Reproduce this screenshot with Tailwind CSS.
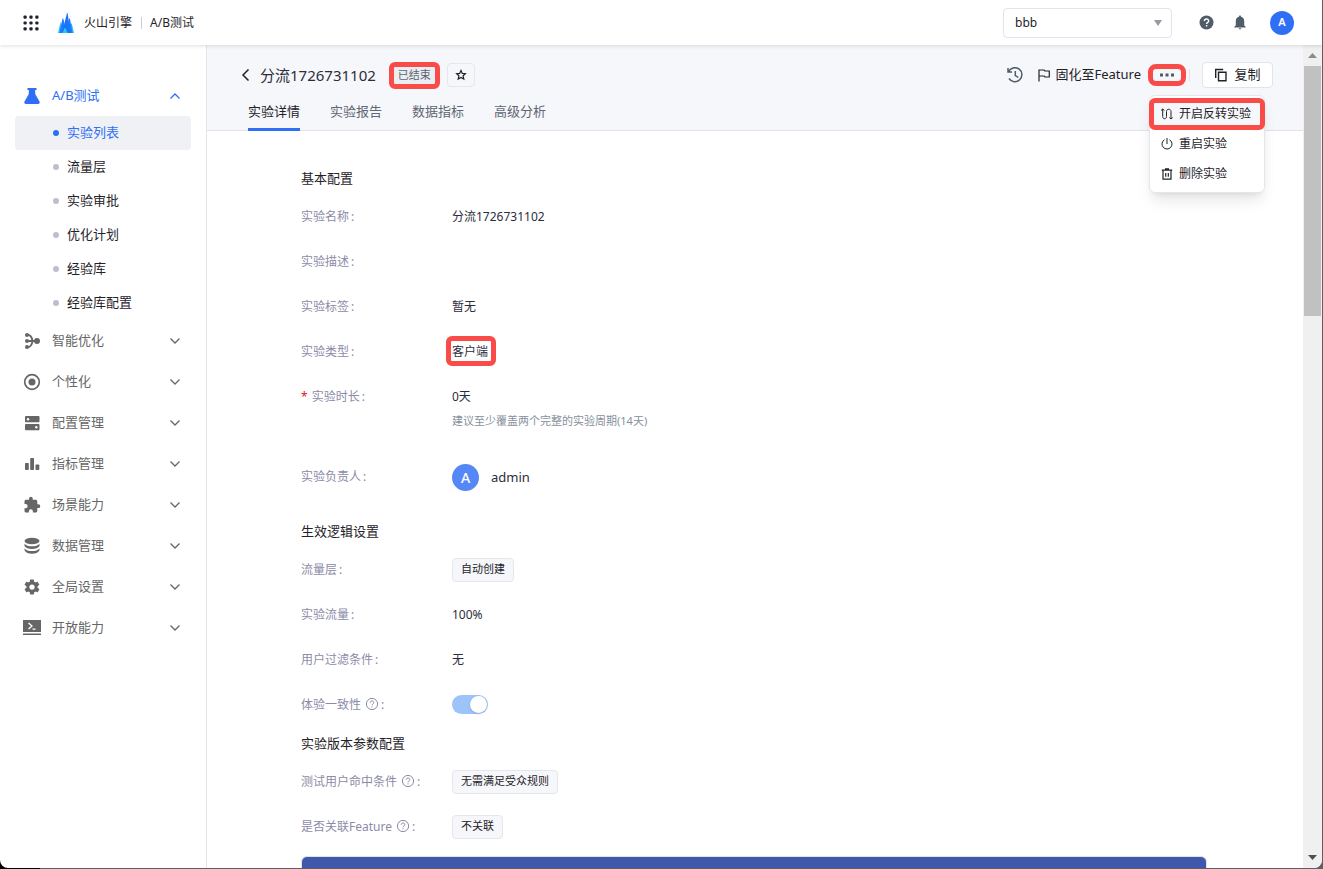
<!DOCTYPE html>
<html lang="zh-CN">
<head>
<meta charset="utf-8">
<title>A/B测试 - 实验详情</title>
<script src="https://cdn.jsdelivr.net/npm/@tailwindcss/browser@4"></script>
</head>
<body class="h-screen overflow-hidden bg-linear-to-r from-black from-3% to-[#606060] to-3% font-['Noto_Sans','Noto_Sans_CJK_SC',sans-serif] text-xs font-normal text-[#1f2329]">
<svg class="hidden">
  <symbol id="down" viewBox="0 0 12 12"><path d="M1.500 3.500 6 8l4.500-4.500" fill="none" stroke="currentColor" stroke-width="1.300"/></symbol>
  <symbol id="help" viewBox="0 0 14 14"><circle cx="7" cy="7" r="5.600" fill="none" stroke="currentColor"/><path d="M5.200 5.700c0-2.300 3.600-2.300 3.600-.1C8.800 7 7 6.900 7 8.300M7 9.300v1.100" fill="none" stroke="currentColor"/></symbol>
</svg>
<div class="flex h-full flex-col pr-px pb-px">
<div class="flex min-h-0 flex-1 flex-col overflow-hidden rounded-b-lg bg-white">

<header class="relative z-20 flex h-[45px] shrink-0 items-center bg-white pr-7 pl-[23px] shadow-[0_1px_4px_rgba(0,0,0,0.13)]">
  <button aria-label="应用" class="mr-[19px]"><svg class="size-4" viewBox="0 0 16 16" fill="#1f2329"><rect x="0.500" y="0.500" width="3.200" height="3.200" rx="1"/><rect x="6.400" y="0.500" width="3.200" height="3.200" rx="1"/><rect x="12.300" y="0.500" width="3.200" height="3.200" rx="1"/><rect x="0.500" y="6.400" width="3.200" height="3.200" rx="1"/><rect x="6.400" y="6.400" width="3.200" height="3.200" rx="1"/><rect x="12.300" y="6.400" width="3.200" height="3.200" rx="1"/><rect x="0.500" y="12.300" width="3.200" height="3.200" rx="1"/><rect x="6.400" y="12.300" width="3.200" height="3.200" rx="1"/><rect x="12.300" y="12.300" width="3.200" height="3.200" rx="1"/></svg></button>
  <svg class="mr-2.5 h-5 w-4" viewBox="0 0 16 20"><path d="M0 20 2.500 9.500h.7L5 20z" fill="#20c7dc"/><path d="M16 20l-2.200-9.500h-.7L11 20z" fill="#20c7dc"/><path d="M1.500 20 4.500 5.500h.8L8.500 20z" fill="#1f7bff"/><path d="M8.500 20l2.600-14.500h.8L14.500 20z" fill="#1f7bff"/><path d="M4 20 9 0h.6L12.500 20z" fill="#1b72ff"/><path d="M4.500 20l2.200-5h.8L9.500 20z" fill="#21cfe0"/></svg>
  <a href="#">火山引擎</a>
  <span class="mr-2 ml-[9px] h-3 w-px bg-[#c9cdd4]"></span>
  <span>A/B测试</span>
  <div class="relative ml-auto w-[169px]">
    <select aria-label="项目" class="h-[30px] w-full appearance-none rounded border border-[#e1e4ea] bg-white pl-[11px] text-xs font-normal"><option>bbb</option></select>
    <svg class="pointer-events-none absolute top-3 right-2.5 h-1.5 w-2" viewBox="0 0 8 6"><path d="M0 0h8L4 6z" fill="#939aa4"/></svg>
  </div>
  <button aria-label="帮助" class="ml-[27px]"><svg class="size-[15px]" viewBox="0 0 15 15"><circle cx="7.500" cy="7.500" r="7" fill="#515c69"/><path d="M5.400 6.100c0-2.800 4.300-2.700 4.300-.2 0 1.500-2.100 1.500-2.100 3.100M7.600 10v1.500" fill="none" stroke="#fff" stroke-width="1.400"/></svg></button>
  <button aria-label="通知" class="ml-5"><svg class="h-[15px] w-3" viewBox="0 0 12 15" fill="#515c69"><path d="M6 .5c.7 0 1 .4 1 1.200C9 2.100 10.200 3.800 10.200 6v4.200L11.700 12v.6H.3V12l1.500-1.800V6C1.800 3.800 3 2.100 5 1.700 5 .9 5.300.5 6 .5zM4.700 13.300h2.600c0 1.500-2.600 1.500-2.600 0z"/></svg></button>
  <button aria-label="账户" class="ml-6 size-6 rounded-full bg-[#2e6ff5] text-[11px] font-semibold text-white">A</button>
</header>

<div class="flex min-h-0 flex-1">
<nav class="w-[207px] shrink-0 border-r border-[#e3e4ec] px-[15px] pt-[31px] text-[13px] text-[#666]">
  <a href="#" class="flex h-10 items-center pr-2.5 pl-2 text-[#2e6ff5]"><svg class="mr-[11px] size-[18px]" viewBox="0 0 18 18" fill="#2e6ff5"><path d="M4.500 1h9v2h-1.300v4l4.300 7.500c.6 1.300 0 2.500-1.500 2.500H3c-1.500 0-2.100-1.200-1.500-2.500L5.800 7V3H4.500z"/></svg><span class="flex-1">A/B测试</span><svg class="size-3 rotate-180"><use href="#down"/></svg></a>
  <ul class="text-[#1f2329]">
    <li><a href="#" class="flex h-[34px] items-center gap-2 rounded bg-[#f0f1f5] pl-[38px] text-[#2e6ff5]"><i class="size-1.5 rounded-full bg-[#2e6ff5]"></i>实验列表</a></li>
    <li><a href="#" class="flex h-[34px] items-center gap-2 pl-[38px]"><i class="size-1.5 rounded-full bg-[#bcc0ce]"></i>流量层</a></li>
    <li><a href="#" class="flex h-[34px] items-center gap-2 pl-[38px]"><i class="size-1.5 rounded-full bg-[#bcc0ce]"></i>实验审批</a></li>
    <li><a href="#" class="flex h-[34px] items-center gap-2 pl-[38px]"><i class="size-1.5 rounded-full bg-[#bcc0ce]"></i>优化计划</a></li>
    <li><a href="#" class="flex h-[34px] items-center gap-2 pl-[38px]"><i class="size-1.5 rounded-full bg-[#bcc0ce]"></i>经验库</a></li>
    <li><a href="#" class="flex h-[34px] items-center gap-2 pl-[38px]"><i class="size-1.5 rounded-full bg-[#bcc0ce]"></i>经验库配置</a></li>
  </ul>
  <a href="#" class="flex h-[41px] items-center pr-2.5 pl-2"><svg class="mr-[11px] size-[18px]" viewBox="0 0 18 18" fill="#666"><circle cx="4" cy="3" r="2"/><circle cx="4" cy="9" r="2"/><circle cx="4" cy="15" r="2"/><circle cx="14" cy="9" r="3"/><path d="M4 2.600c4 0 5 2.400 5.500 6.400C9 13 8 15.400 4 15.400M4 9h9" fill="none" stroke="#666" stroke-width="1.900"/></svg><span class="flex-1">智能优化</span><svg class="size-3"><use href="#down"/></svg></a>
  <a href="#" class="flex h-[41px] items-center pr-2.5 pl-2"><svg class="mr-[11px] size-[18px]" viewBox="0 0 18 18" fill="#666"><circle cx="9" cy="9" r="7.300" fill="none" stroke="#666" stroke-width="1.700"/><circle cx="9" cy="9" r="3.500"/></svg><span class="flex-1">个性化</span><svg class="size-3"><use href="#down"/></svg></a>
  <a href="#" class="flex h-[41px] items-center pr-2.5 pl-2"><svg class="mr-[11px] size-[18px]" viewBox="0 0 18 18" fill="#666"><rect x="2" y="2" width="14.500" height="6.300" rx="1"/><rect x="2" y="10" width="14.500" height="6.300" rx="1"/><circle cx="5" cy="5.200" r="1.200" fill="#fff"/><circle cx="13.300" cy="13.200" r="1.200" fill="#fff"/></svg><span class="flex-1">配置管理</span><svg class="size-3"><use href="#down"/></svg></a>
  <a href="#" class="flex h-[41px] items-center pr-2.5 pl-2"><svg class="mr-[11px] size-[18px]" viewBox="0 0 18 18" fill="#666"><rect x="2" y="8" width="3.800" height="7" rx=".7"/><rect x="7.200" y="3" width="3.800" height="12" rx=".7"/><rect x="12.500" y="9.500" width="3.800" height="5.500" rx=".7"/></svg><span class="flex-1">指标管理</span><svg class="size-3"><use href="#down"/></svg></a>
  <a href="#" class="flex h-[41px] items-center pr-2.5 pl-2"><svg class="mr-[11px] size-[18px]" viewBox="0 0 24 24" fill="#666"><path d="M20.500 11H19V7c0-1.100-.9-2-2-2h-4V3.500a2.500 2.500 0 0 0-5 0V5H4c-1.100 0-2 .9-2 2v3.800h1.500a2.700 2.700 0 0 1 0 5.400H2V20c0 1.100.9 2 2 2h3.800v-1.500a2.700 2.700 0 0 1 5.400 0V22H17c1.100 0 2-.9 2-2v-4h1.500a2.500 2.500 0 0 0 0-5z"/></svg><span class="flex-1">场景能力</span><svg class="size-3"><use href="#down"/></svg></a>
  <a href="#" class="flex h-[41px] items-center pr-2.5 pl-2"><svg class="mr-[11px] size-[18px]" viewBox="0 0 18 18" fill="#666"><ellipse cx="9" cy="4" rx="7.500" ry="3.200"/><path d="M1.500 6.800c2 3.400 13 3.400 15 0V9c-2 4-13 4-15 0zM1.500 11.500c2 3.400 13 3.400 15 0v1.800c-2 4.700-13 4.700-15 0z"/></svg><span class="flex-1">数据管理</span><svg class="size-3"><use href="#down"/></svg></a>
  <a href="#" class="flex h-[41px] items-center pr-2.5 pl-2"><svg class="mr-[11px] size-[18px]" viewBox="0 0 24 24" fill="#666"><path d="M19.400 13a7.500 7.500 0 0 0 0-2l2.100-1.600c.2-.2.300-.4.100-.7l-2-3.400c-.1-.2-.4-.3-.6-.2l-2.500 1a7.300 7.300 0 0 0-1.700-1l-.4-2.600c0-.3-.2-.5-.5-.5h-4c-.2 0-.4.2-.5.400L9 5.100c-.6.300-1.200.600-1.700 1l-2.500-1c-.2-.1-.5 0-.6.200l-2 3.400c-.1.200 0 .5.100.7L4.600 11a7.500 7.500 0 0 0 0 2l-2.200 1.600c-.2.200-.2.400-.1.700l2 3.400c.1.200.4.300.6.200l2.500-1c.5.400 1.100.7 1.700 1l.4 2.700c0 .2.200.4.500.4h4c.2 0 .4-.2.500-.4l.4-2.700c.6-.2 1.200-.6 1.700-1l2.500 1c.2.100.5 0 .6-.2l2-3.400c.1-.2.100-.5-.1-.7zM12 15.500a3.500 3.500 0 1 1 0-7 3.500 3.500 0 0 1 0 7z"/></svg><span class="flex-1">全局设置</span><svg class="size-3"><use href="#down"/></svg></a>
  <a href="#" class="flex h-[41px] items-center pr-2.5 pl-2"><svg class="mr-[11px] size-[18px]" viewBox="0 0 18 18"><path d="M0 1h18v12H0zM0 14.500h18V16H0z" fill="#666"/><path d="m5.500 4 3.500 3-3.500 3M9.500 10.200h3" fill="none" stroke="#fff" stroke-width="1.300"/></svg><span class="flex-1">开放能力</span><svg class="size-3"><use href="#down"/></svg></a>
</nav>

<main class="flex min-w-0 flex-1 flex-col">
  <div class="h-[86px] shrink-0 border-b border-[#e1e3eb] bg-[#f6f7fa] pt-3.5 pr-[30px] pl-[33px]">
    <div class="flex h-8 items-center">
      <button aria-label="返回" class="mr-2"><svg class="h-3 w-3" viewBox="0 0 12 12"><path d="M8.500.5 3 6l5.500 5.500" fill="none" stroke="#1f2329" stroke-width="1.500"/></svg></button>
      <h1 class="text-[15px] text-[#2c2d3c]">分流1726731102</h1>
      <span class="relative ml-3.5 flex h-[23px] items-center rounded border border-[#e1e4ea] bg-[#eaedf2] px-[7px] text-[11px] text-[#5f6570]">已结束<i class="absolute -inset-x-[2px] -inset-y-[3px] rounded-md border-5 border-[#f94b48]"></i></span>
      <button aria-label="收藏" class="ml-2 grid h-6 w-7 place-items-center rounded border border-[#e6e7ec]"><svg class="size-3" viewBox="0 0 12 12"><path d="m6 1.500 1.300 2.900 3.100.3-2.300 2.100.7 3.200L6 8.400 3.200 10l.7-3.200-2.300-2.100 3.100-.3z" fill="none" stroke="#1f2329" stroke-width="1.200"/></svg></button>
      <div class="ml-auto flex items-center">
        <button aria-label="历史"><svg class="size-4" viewBox="0 0 16 16" fill="none" stroke="#515c69" stroke-width="1.500"><path d="M1.500 4.800A7 7 0 1 1 2 11.500M1 1v4h4M8.300 4v4.500l3 2"/></svg></button>
        <button class="ml-3.5 flex items-center gap-1 text-[13px] text-[#1f2329]"><svg class="size-3.5" viewBox="0 0 14 14" fill="none" stroke="#1f2329" stroke-width="1.200"><path d="M2 13.500V2h5l1 1h4.300v6H8L7 8H2"/></svg>固化至Feature</button>
        <div class="relative ml-[7px]">
          <button aria-label="更多" class="grid h-[22px] w-[38px] place-items-center rounded-lg border-5 border-[#f94b48]"><svg class="h-1 w-3.5" viewBox="0 0 14 4" fill="#515c69"><rect x="0" y=".5" width="3" height="3"/><rect x="5.500" y=".5" width="3" height="3"/><rect x="11" y=".5" width="3" height="3"/></svg></button>
          <div role="menu" class="absolute top-[31px] left-px z-10 w-[116px] rounded-md border border-[#e4e6eb] bg-white py-[3px] shadow-lg">
            <button role="menuitem" class="relative flex h-[30px] w-full items-center gap-1.5 bg-[#f6f7fa] pl-[11px]"><svg class="size-3" viewBox="0 0 12 12" fill="none" stroke="#1f2329"><path d="M0 2.500 1.700 1l1.700 1.500M1.700 1v7.500c0 3 3.800 3 3.800 0v-5c0-3 4.500-3 4.500 0V11M8.400 9.500 10 11l1.700-1.500"/></svg>开启反转实验<i class="absolute -inset-x-px -inset-y-px rounded-md border-5 border-[#f94b48]"></i></button>
            <button role="menuitem" class="flex h-[30px] w-full items-center gap-1.5 pl-[11px]"><svg class="size-3" viewBox="0 0 12 12" fill="none" stroke="#1f2329"><path d="M3.500 1.700a5 5 0 1 0 5 0M6 0v6"/></svg>重启实验</button>
            <button role="menuitem" class="flex h-[30px] w-full items-center gap-1.5 pl-[11px]"><svg class="size-3" viewBox="0 0 12 12" fill="none" stroke="#1f2329" stroke-width="1.200"><path d="M.8 2.200h10.400M4 .8h4M2 2.500v8.700h8V2.500M4.700 5v3.800M7.300 5v3.800"/></svg>删除实验</button>
          </div>
        </div>
        <span class="mr-3 ml-[3px] h-3 w-px bg-[#e1e3e8]"></span>
        <button class="flex h-[26px] w-[71px] items-center justify-center gap-1.5 rounded border border-[#e1e4ea] bg-white text-[13px]"><svg class="size-3.5" viewBox="0 0 14 14" fill="none" stroke="#1f2329" stroke-width="1.400"><path d="M1.700 10V1.500h7.500M4.500 4.200H12v8.500H4.500z"/></svg>复制</button>
      </div>
    </div>
    <div role="tablist" class="ml-2 flex h-10 gap-[30px] text-[13px] text-[#5f6674]">
      <button role="tab" aria-selected="true" class="border-b-[3px] border-b-[#2e6ff5] pt-[5px] text-[#1f2329]">实验详情</button>
      <button role="tab" class="pt-0.5">实验报告</button>
      <button role="tab" class="pt-0.5">数据指标</button>
      <button role="tab" class="pt-0.5">高级分析</button>
    </div>
  </div>

  <div class="min-h-0 flex-1 overflow-hidden pt-[35px] pr-24 pl-[94px]">
    <h2 class="mb-1 text-[13px] leading-6">基本配置</h2>
    <dl class="text-[#8c8ba7]">
      <div class="flex h-[45px] items-center"><dt class="w-[151px]">实验名称<span class="ml-0.5">:</span></dt><dd class="text-[#2c2d3c]">分流1726731102</dd></div>
      <div class="flex h-[45px] items-center"><dt class="w-[151px]">实验描述<span class="ml-0.5">:</span></dt><dd></dd></div>
      <div class="flex h-[45px] items-center"><dt class="w-[151px]">实验标签<span class="ml-0.5">:</span></dt><dd class="text-[#2c2d3c]">暂无</dd></div>
      <div class="flex h-[45px] items-center"><dt class="w-[151px]">实验类型<span class="ml-0.5">:</span></dt><dd class="relative text-[#2c2d3c]">客户端<i class="absolute -top-2 -right-2 -bottom-1.5 -left-1.5 rounded-md border-5 border-[#f94b48]"></i></dd></div>
      <div class="flex h-20 pt-[11px] leading-6"><dt class="w-[151px]"><span class="mr-1 text-[#e02020]">*</span>实验时长<span class="ml-0.5">:</span></dt><dd class="text-[#2c2d3c]">0天<p class="text-[11px] leading-6 text-[#86909c]">建议至少覆盖两个完整的实验周期(14天)</p></dd></div>
      <div class="flex h-[45px] items-center"><dt class="w-[151px]">实验负责人<span class="ml-0.5">:</span></dt><dd class="flex items-center gap-3 pt-0.5 text-[13px] text-[#2c2d3c]"><span class="grid size-[27px] place-items-center rounded-full bg-[#5587f7] text-sm font-medium text-white">A</span>admin</dd></div>
    </dl>
    <h2 class="mt-5 mb-1 text-[13px] leading-6">生效逻辑设置</h2>
    <dl class="text-[#8c8ba7]">
      <div class="flex h-[45px] items-center"><dt class="w-[151px]">流量层<span class="ml-0.5">:</span></dt><dd class="flex h-6 items-center rounded border border-[#e4e6eb] bg-[#f6f7fa] px-2 text-[11px] text-[#1f2329]">自动创建</dd></div>
      <div class="flex h-[45px] items-center"><dt class="w-[151px]">实验流量<span class="ml-0.5">:</span></dt><dd class="text-[#2c2d3c]">100%</dd></div>
      <div class="flex h-[45px] items-center"><dt class="w-[151px]">用户过滤条件<span class="ml-0.5">:</span></dt><dd class="text-[#2c2d3c]">无</dd></div>
      <div class="flex h-[45px] items-center"><dt class="flex w-[151px] items-center"><label for="same">体验一致性</label><svg class="mr-0.5 mb-0.5 ml-1 size-3.5"><use href="#help"/></svg>:</dt><dd class="flex"><input id="same" type="checkbox" checked class="h-[19px] w-9 appearance-none rounded-full bg-[#9cc4f8] before:mt-px before:mr-px before:ml-auto before:block before:size-[17px] before:rounded-full before:bg-white before:shadow-sm"></dd></div>
    </dl>
    <h2 class="mt-1 mb-1 text-[13px] leading-6">实验版本参数配置</h2>
    <dl class="text-[#8c8ba7]">
      <div class="flex h-[45px] items-center"><dt class="flex w-[151px] items-center">测试用户命中条件<svg class="mr-0.5 mb-0.5 ml-1 size-3.5"><use href="#help"/></svg>:</dt><dd class="flex h-6 items-center rounded border border-[#e4e6eb] bg-[#f6f7fa] px-2 text-[11px] text-[#1f2329]">无需满足受众规则</dd></div>
      <div class="flex h-[45px] items-center"><dt class="flex w-[151px] items-center">是否关联Feature<svg class="mr-0.5 mb-0.5 ml-1 size-3.5"><use href="#help"/></svg>:</dt><dd class="flex h-6 items-center rounded border border-[#e4e6eb] bg-[#f6f7fa] px-2 text-[11px] text-[#1f2329]">不关联</dd></div>
    </dl>
    <div class="mt-[7px] h-12 rounded-md border border-[#dfe2ea] bg-[#4058ab]"></div>
  </div>
</main>

<div class="flex w-[19px] shrink-0 flex-col items-center bg-[#f0f0f0]" aria-hidden="true">
  <svg class="my-2 h-[5px] w-[9px]" viewBox="0 0 9 5"><path d="M0 5h9L4.500 0z" fill="#8b8b8b"/></svg>
  <div class="h-[250px] w-[17px] bg-[#c1c1c1]"></div>
  <svg class="mt-auto mb-2 h-[5px] w-[9px]" viewBox="0 0 9 5"><path d="M0 0h9L4.500 5z" fill="#505050"/></svg>
</div>
</div>
</div>
</div>
</body>
</html>
